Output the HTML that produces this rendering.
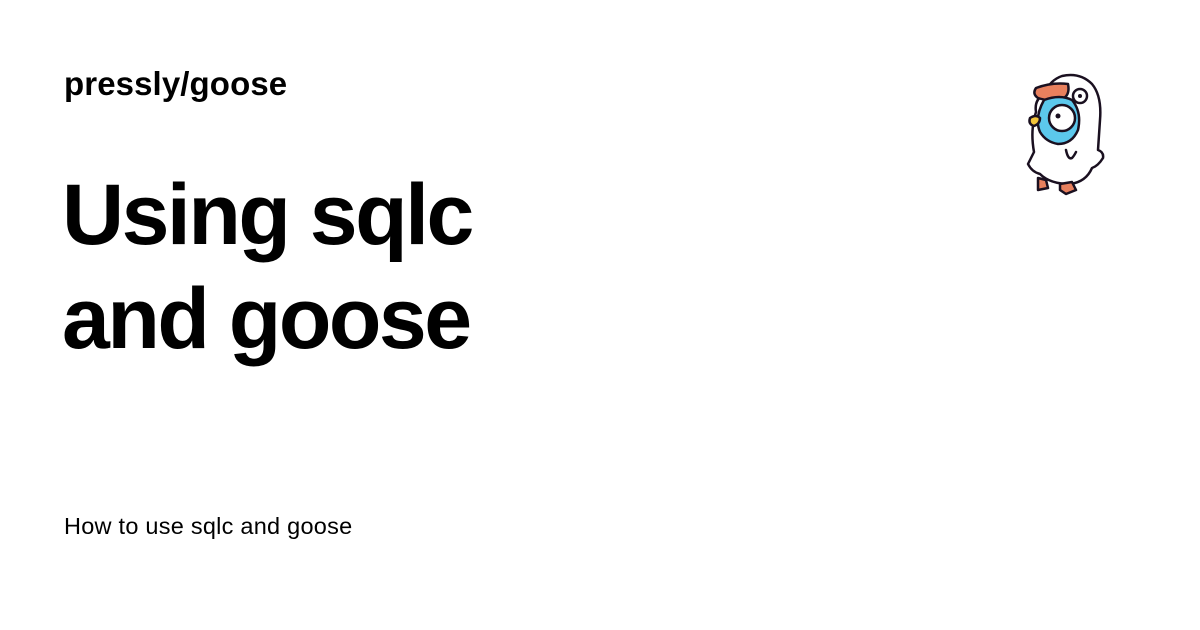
<!DOCTYPE html>
<html><head><style>
body{margin:0;width:1200px;height:630px;background:#fff;position:relative;overflow:hidden;font-family:"Liberation Sans",Arial,sans-serif;color:#000}
.r{position:absolute;left:64px;top:65px;font-size:33px;font-weight:bold;letter-spacing:0.1px}
.t{position:absolute;left:62px;top:163px;font-size:86px;font-weight:bold;line-height:104px;letter-spacing:-2.5px}
.s{position:absolute;left:64px;top:513px;font-size:23.5px;letter-spacing:0.25px}
svg{position:absolute;left:0;top:0}
</style></head><body>
<div class="r">pressly/goose</div>
<div class="t">Using sqlc<br>and goose</div>
<div class="s">How to use sqlc and goose</div>
<svg width="1200" height="630" viewBox="0 0 1200 630">
<g stroke="#1a1020" stroke-width="2.5" stroke-linejoin="round" stroke-linecap="round">
<path d="M1062 76 Q1080 72 1092 84 Q1102 96 1100 120 L1098 150 Q1104 152 1103 158 Q1098 166 1092 168 Q1086 182 1070 184 Q1050 184 1040 174 Q1032 172 1028 164 L1034 152 Q1030 130 1036 112 Q1034 100 1044 94 Q1050 80 1062 76Z" fill="#fff"/>
<path d="M1036 88 Q1052 82 1068 84 Q1070 94 1064 98 Q1050 102 1038 98 Q1032 94 1036 88Z" fill="#e8805e"/>
<path d="M1044 100 Q1060 94 1072 100 Q1082 112 1078 130 Q1072 144 1058 144 Q1046 142 1040 132 Q1034 118 1044 100Z" fill="#5cc8ec"/>
<circle cx="1062" cy="118" r="13" fill="#fff"/>
<circle cx="1080" cy="96" r="7" fill="#fff"/>
<path d="M1030 118 Q1036 114 1040 118 Q1040 124 1034 126 Q1028 124 1030 118Z" fill="#f2c53a"/>
<path d="M1038 178 L1046 180 L1048 188 L1038 190 Z" fill="#e8805e"/>
<path d="M1060 184 L1072 182 L1076 190 L1066 194 L1060 190 Z" fill="#e8805e"/>
<path d="M1066 150 Q1068 160 1072 158 Q1074 156 1076 152" fill="none"/>
</g>
<circle cx="1058" cy="116" r="2.5" fill="#1a1020"/>
<circle cx="1080" cy="96" r="2" fill="#1a1020"/>
</svg>
</body></html>
